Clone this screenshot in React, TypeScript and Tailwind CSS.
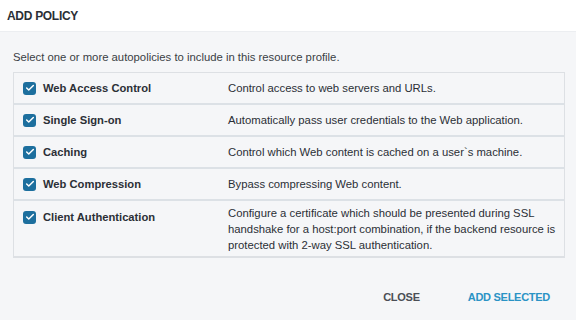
import { Check } from "lucide-react";

const policies = [
  { name: "Web Access Control", desc: "Control access to web servers and URLs." },
  { name: "Single Sign-on", desc: "Automatically pass user credentials to the Web application." },
  { name: "Caching", desc: "Control which Web content is cached on a user`s machine." },
  { name: "Web Compression", desc: "Bypass compressing Web content." },
  {
    name: "Client Authentication",
    desc: "Configure a certificate which should be presented during SSL handshake for a host:port combination, if the backend resource is protected with 2-way SSL authentication.",
  },
];

export default function App() {
  return (
    <div
      className="w-[576px] h-[320px] bg-[#f5f6f8] text-[#2b2f36] flex flex-col"
      style={{ fontFamily: "'Liberation Sans', Arial, sans-serif" }}
    >
      {/* Header */}
      <div className="h-[32px] bg-white border-b border-[#eceef1] flex items-center px-[7px]">
        <h1 className="text-[12px] font-bold tracking-tight text-[#2b2f36]">ADD POLICY</h1>
      </div>

      <div className="px-[13px] pt-[18px]">
        <p className="text-[11.3px] text-[#3a3e45] leading-[14px]">
          Select one or more autopolicies to include in this resource profile.
        </p>

        <div className="mt-[8px] w-[552px] border border-[#dde0e4] border-b-2">
          {policies.map((p, i) => {
            const last = i === policies.length - 1;
            return (
              <div
                key={p.name}
                className={`flex items-start ${last ? "pt-[4px] pb-[3px]" : "py-[7px] border-b-2 border-[#dce1e6]"}`}
              >
                <div className={`w-[214px] flex items-center gap-[7px] pl-[9px] h-[16px] ${last ? "mt-[4px]" : ""}`}>
                  <span className="w-[13px] h-[13px] rounded-[3px] bg-[#1d6f9e] flex items-center justify-center">
                    <Check size={10} strokeWidth={3.5} color="white" />
                  </span>
                  <span className="text-[11.2px] font-bold text-[#2b2f36]">{p.name}</span>
                </div>
                <div className="flex-1 pr-[8px] text-[11.3px] leading-[16px] text-[#2b2f36]">{p.desc}</div>
              </div>
            );
          })}
        </div>
      </div>

      {/* Footer */}
      <div className="flex justify-end items-center gap-[48px] pr-[26px] mt-[31px]">
        <button className="text-[11px] font-bold text-[#4a4e55] tracking-tight">CLOSE</button>
        <button className="text-[11px] font-bold text-[#2a93c5] tracking-tight">ADD SELECTED</button>
      </div>
    </div>
  );
}
